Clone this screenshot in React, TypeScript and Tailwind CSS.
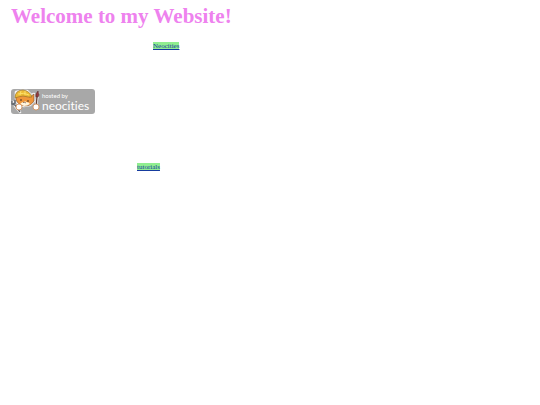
function Cat() {
  return (
    <svg viewBox="0 0 30 26" className="h-[26px] w-[30px] shrink-0" aria-hidden="true">
      <g fill="none" stroke="#f4f4f4" strokeWidth="2.6" strokeLinecap="round" strokeLinejoin="round">
        <path d="M2 13 4 17 9 23M25 16 27 4" />
        <path d="M5 9 5 3 10 2 16 2 20 6 23 5 23 12 19 16 13 17 7 15Z" />
      </g>
      <path d="M5 9 6 4 10 5 19 8 23 5 23 12Q20 17 14 17 7 16 5 11Z" fill="#ef963a" stroke="#7a4c2c" strokeWidth=".6" />
      <path d="M9 15Q11 13 13 13L14 12 15 13Q18 13 19 15 16 17 13 17Z" fill="#fff5df" />
      <path d="M4 9Q4 1 12 1 19 2 21 8L17 8Q12 6 7 8Z" fill="#ecba34" stroke="#8f6b2a" strokeWidth=".6" />
      <path d="M10 2 9 6M14 2V6M7 5Q13 3 18 6" stroke="#fbe06b" strokeWidth="1" fill="none" />
      <circle cx="10" cy="11" r=".8" fill="#33251f" />
      <circle cx="17" cy="12" r=".8" fill="#33251f" />
      <path d="m12 14 1-1 2 1" fill="none" stroke="#513226" strokeWidth=".6" />
      <path d="M1 12v3l3 1 5 7M4 11v3l-2 1" fill="none" stroke="#666a70" strokeWidth="1.4" />
      <path d="m25 18 1-10" stroke="#633c34" strokeWidth="1.3" />
      <path d="M25 8Q24 5 27 2L28 6 27 8Z" fill="#96383b" stroke="#56302f" strokeWidth=".6" />
      <circle cx="8" cy="18" r="3" fill="#fff" stroke="#d28a50" strokeWidth=".8" />
      <circle cx="25" cy="18" r="3" fill="#fff" stroke="#d28a50" strokeWidth=".8" />
    </svg>
  );
}

export default function App() {
  return (
    <main className="px-[11px] pt-1 font-['Liberation_Serif',serif] text-[7px] leading-[8px]">
      <h1 className="text-[21px] leading-6 font-bold text-[#ee82ee]">Welcome to my Website!</h1>
      <p className="mt-[14px] pl-[142px]">
        <a href="#neocities" className="inline-block bg-[#90ee90] text-[#163b9e] underline">Neocities</a>
      </p>
      <a
        href="#hosted"
        className="mt-[39px] flex h-[25px] w-[84px] items-center rounded-[3px] bg-[#a8a8a8] font-['Lato',sans-serif] text-white [font-variant-ligatures:none]"
      >
        <Cat />
        <span className="flex flex-col pl-px">
          <span className="text-[6px] leading-[8px]">hosted by</span>
          <span className="text-[12px] leading-[12px]">neocities</span>
        </span>
      </a>
      <p className="mt-[49px] pl-[126px]">
        <a href="#tutorials" className="inline-block bg-[#90ee90] text-[#163b9e] underline">tutorials</a>
      </p>
    </main>
  );
}
